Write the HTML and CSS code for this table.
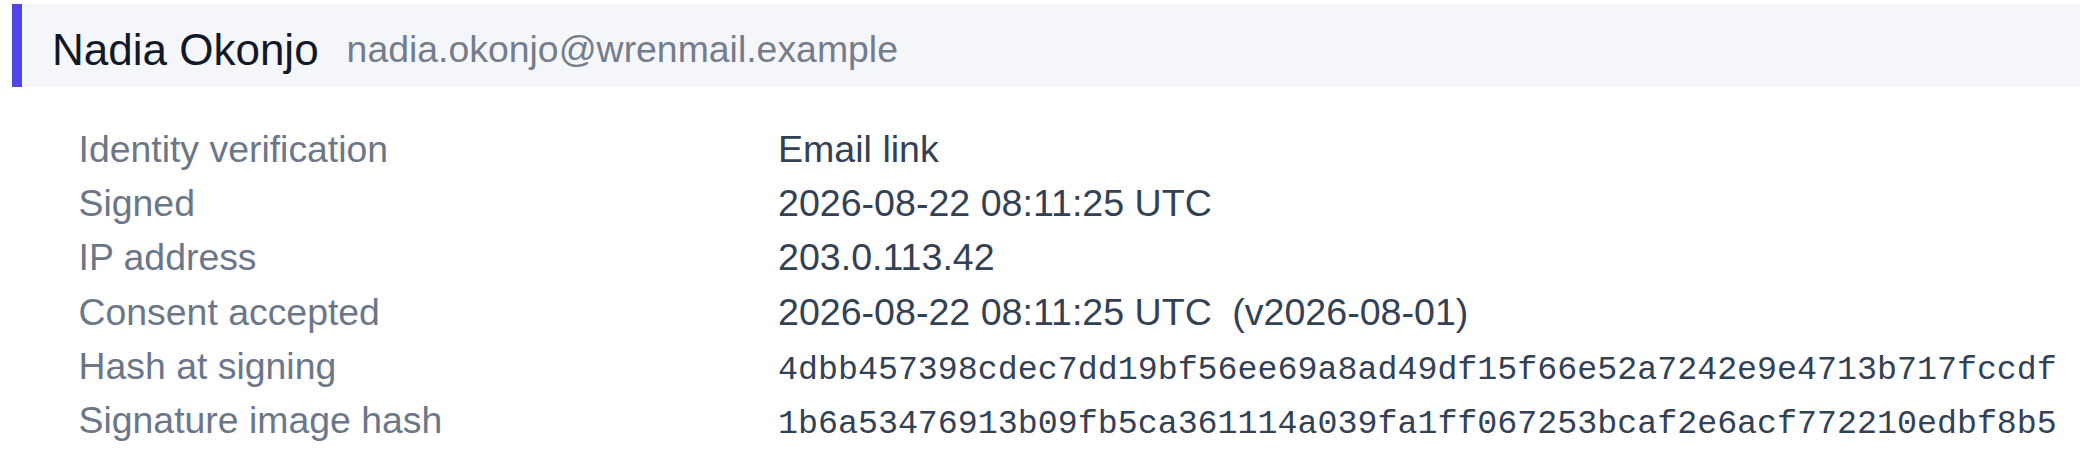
FILE: index.html
```html
<!DOCTYPE html>
<html lang="en">
<head>
<meta charset="utf-8">
<title>Signer audit</title>
<link rel="stylesheet" href="styles.css">
</head>
<body>
<section class="signer">
  <header class="signer-head">
    <span class="signer-name">Nadia Okonjo</span>
    <span class="signer-email">nadia.okonjo@wrenmail.example</span>
  </header>
  <dl class="audit">
    <div class="audit-row">
      <dt class="audit-label">Identity verification</dt>
      <dd class="audit-value">Email link</dd>
    </div>
    <div class="audit-row">
      <dt class="audit-label">Signed</dt>
      <dd class="audit-value">2026-08-22 08:11:25 UTC</dd>
    </div>
    <div class="audit-row">
      <dt class="audit-label">IP address</dt>
      <dd class="audit-value">203.0.113.42</dd>
    </div>
    <div class="audit-row">
      <dt class="audit-label">Consent accepted</dt>
      <dd class="audit-value">2026-08-22 08:11:25 UTC <span class="version">(v2026-08-01)</span></dd>
    </div>
    <div class="audit-row">
      <dt class="audit-label">Hash at signing</dt>
      <dd class="audit-value mono">4dbb457398cdec7dd19bf56ee69a8ad49df15f66e52a7242e9e4713b717fccdf</dd>
    </div>
    <div class="audit-row">
      <dt class="audit-label">Signature image hash</dt>
      <dd class="audit-value mono">1b6a53476913b09fb5ca361114a039fa1ff067253bcaf2e6acf772210edbf8b5</dd>
    </div>
  </dl>
</section>
</body>
</html>
```

FILE: styles.css
```css
html, body {
  margin: 0;
  padding: 0;
  background: #ffffff;
}

body {
  font-family: "Liberation Sans", Arial, Helvetica, sans-serif;
  color: #334155;
}

.signer {
  padding: 4px 0 0 12px;
}

.signer-head {
  display: flex;
  align-items: center;
  gap: 28px;
  background: #f5f6fa;
  border-left: 10px solid #4f46e5;
  padding: 20.5px 0 12px 30px;
}

.signer-name {
  font-size: 44px;
  color: #111827;
  white-space: nowrap;
}

.signer-email {
  font-size: 37.4px;
  color: #737d8c;
  white-space: nowrap;
}

.audit {
  margin: 35px 0 0 0;
  padding: 0 0 0 66.5px;
}

.audit-row {
  display: flex;
  align-items: baseline;
  height: 54.4px;
}

.audit-label {
  flex: 0 0 699.5px;
  margin: 0;
  font-size: 37.4px;
  line-height: 54.4px;
  color: #6b7789;
  white-space: nowrap;
}

.audit-value {
  margin: 0;
  font-size: 37.6px;
  line-height: 54.4px;
  color: #334155;
  white-space: nowrap;
}

.audit-value.mono {
  font-family: "Liberation Mono", "Courier New", monospace;
  font-size: 33.3px;
  line-height: 40px;
}

.version {
  margin-left: 10px;
}
```
